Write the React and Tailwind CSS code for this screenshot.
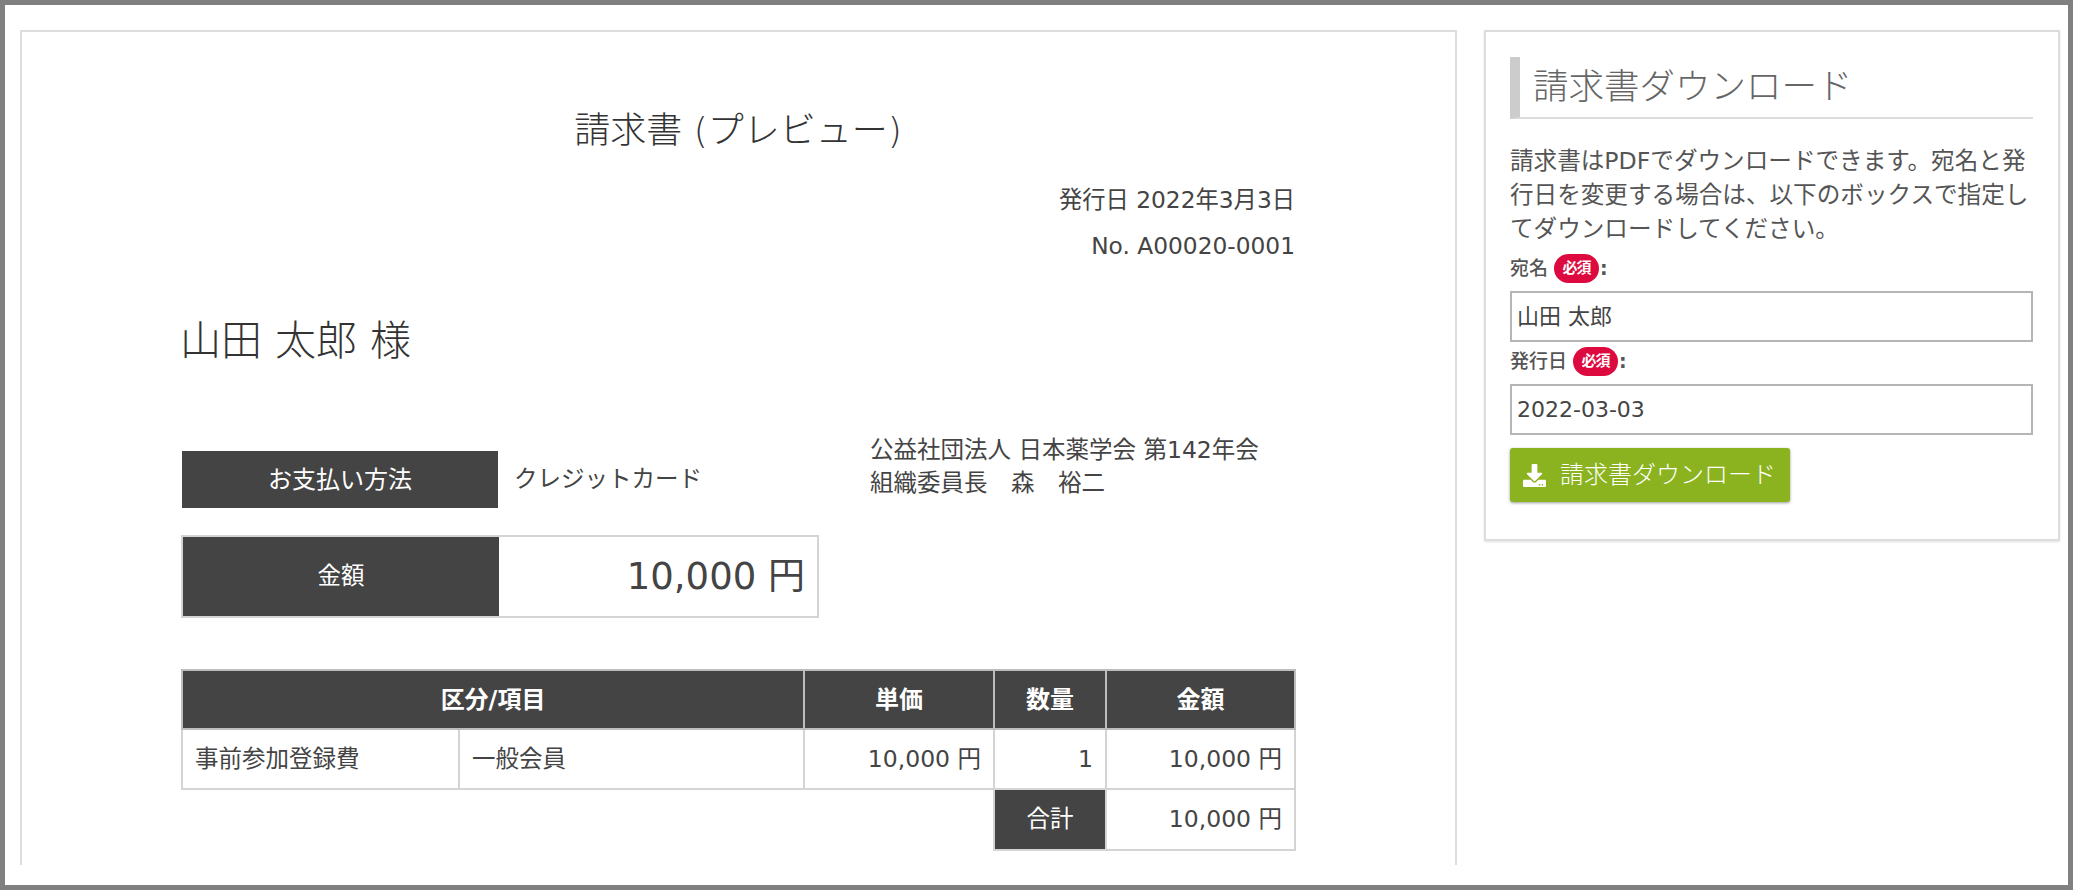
import React from "react";
import { FaDownload } from "react-icons/fa";

const font = "font-['DejaVu_Sans','Noto_Sans_CJK_JP',sans-serif]";

function Badge() {
  return (
    <span className="mx-[1px] inline-flex h-[29px] w-[45px] items-center justify-center rounded-full bg-[#dc0a3e] text-[15px] leading-none font-bold tracking-[-1px] text-white">
      必須
    </span>
  );
}

function Field({ label, value, className }) {
  return (
    <div className={className}>
      <div className="flex h-[30px] items-center text-[19px] leading-[30px] font-medium text-[#555]">
        <span className="mr-[5px]">{label}</span>
        <Badge />
        <span className="font-bold">:</span>
      </div>
      <div className="mt-[8px] flex h-[51px] items-center border-2 border-[#b5b5b5] bg-white pl-[5px] text-[22px] font-normal text-[#444]">
        {value}
      </div>
    </div>
  );
}

export default function App() {
  const cell = "border-2 border-[#d4d4d4] px-[12px] pt-[1px] text-[23.5px] font-normal text-[#444]";
  const head = "border-2 border-[#bdbdbd] bg-[#444] text-center text-[24px] font-bold text-white";
  return (
    <div className={`h-[890px] w-[2081px] bg-white ${font}`}>
      <div className="h-full w-[2073px] border-[5px] border-[#808080]">
        <div className="flex h-full gap-[27px] overflow-hidden bg-white pt-[25px] pr-[8px] pb-[20px] pl-[15px]">
          <main className="w-[1437px] shrink-0 border-x-2 border-t-2 border-[#dddddd] pl-[159px] text-[#444]">
            <div className="w-[1114px]">
              <h1 className="mt-[77px] h-[44px] text-center text-[36px] leading-[44px] font-light text-[#333]">請求書 (プレビュー)</h1>
              <div className="mt-[24px] text-right text-[23.3px] leading-[46px] font-normal">
                <p>発行日 2022年3月3日</p>
                <p>No. A00020-0001</p>
              </div>
              <h2 className="mt-[42px] -ml-[1px] h-[60px] text-[41px] leading-[60px] font-light text-[#333]">山田 太郎 様</h2>

              <div className="mt-[80px] flex h-[57px] items-center pl-[1px] text-[23.5px]">
                <div className="flex h-full w-[316px] items-center justify-center bg-[#444] text-[24px] text-white">お支払い方法</div>
                <div className="ml-[16px] w-[356px] font-normal">クレジットカード</div>
                <div className="-mt-[17px] self-start leading-[33px] font-normal">
                  <p>公益社団法人 日本薬学会 第142年会</p>
                  <p>組織委員長　森　裕二</p>
                </div>
              </div>

              <div className="mt-[27px] flex h-[83px] w-[638px] border-2 border-[#d4d4d4]">
                <div className="flex w-[316px] items-center justify-center bg-[#444] text-[23.5px] text-white">金額</div>
                <div className="flex flex-1 items-center justify-end pr-[12px] text-[37px] font-normal">10,000 円</div>
              </div>

              <table className="mt-[51px] w-[1113px] table-fixed border-collapse">
                <colgroup>
                  <col className="w-[277px]" />
                  <col className="w-[345px]" />
                  <col className="w-[190px]" />
                  <col className="w-[112px]" />
                  <col className="w-[189px]" />
                </colgroup>
                <thead>
                  <tr className="h-[59px]">
                    <th colSpan={2} className={head}>区分/項目</th>
                    <th className={head}>単価</th>
                    <th className={head}>数量</th>
                    <th className={head}>金額</th>
                  </tr>
                </thead>
                <tbody>
                  <tr className="h-[60px]">
                    <td className={`${cell} text-left`}>事前参加登録費</td>
                    <td className={`${cell} text-left`}>一般会員</td>
                    <td className={`${cell} text-right`}>10,000 円</td>
                    <td className={`${cell} text-right`}>1</td>
                    <td className={`${cell} text-right`}>10,000 円</td>
                  </tr>
                  <tr className="h-[61px]">
                    <td colSpan={3} className="border-0" />
                    <td className="border-2 border-[#d4d4d4] bg-[#444] text-center text-[23.5px] text-white">合計</td>
                    <td className={`${cell} text-right`}>10,000 円</td>
                  </tr>
                </tbody>
              </table>
            </div>
          </main>

          <aside className="h-[511px] w-[576px] shrink-0 border-2 border-[#dddddd] pt-[25px] pr-[25px] pl-[24px] shadow-[0_1px_2px_rgba(0,0,0,0.12)]">
            <h3 className="flex h-[62px] items-center border-b-2 border-l-[10px] border-[#dcdcdc] border-l-[#cccccc] pl-[13px] text-[35.5px] font-light text-[#666]">
              請求書ダウンロード
            </h3>
            <p className="mt-[25px] whitespace-nowrap text-[23.6px] leading-[34px] font-normal text-[#555]">
              請求書はPDFでダウンロードできます。宛名と発<br />
              行日を変更する場合は、以下のボックスで指定し<br />
              てダウンロードしてください。
            </p>
            <Field className="mt-[7px]" label="宛名" value="山田 太郎" />
            <Field className="mt-[4px]" label="発行日" value="2022-03-03" />
            <button className="mt-[13px] flex h-[54px] w-[280px] items-center rounded-[3px] bg-[#8ab31f] pl-[13px] text-[24px] font-light whitespace-nowrap text-white shadow-[0_1px_3px_rgba(0,0,0,0.4)]">
              <FaDownload className="mr-[14px] h-[23px] w-[23px] shrink-0" />
              請求書ダウンロード
            </button>
          </aside>
        </div>
      </div>
    </div>
  );
}
